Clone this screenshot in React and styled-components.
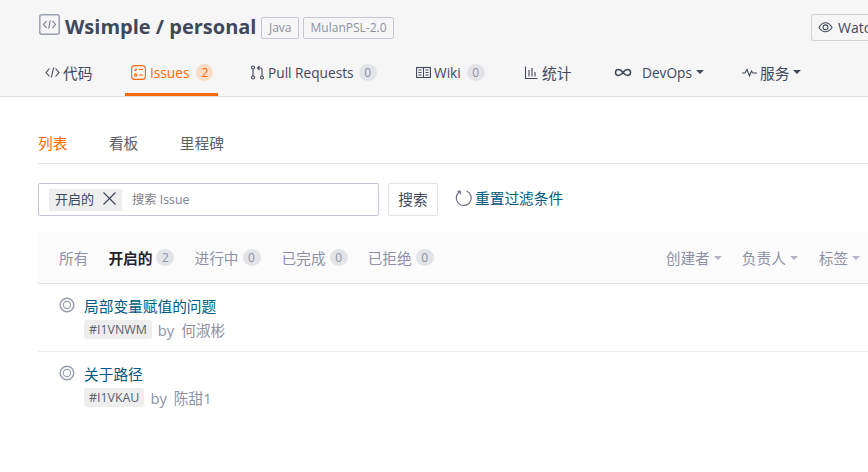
import React from 'react'
import styled, { createGlobalStyle } from 'styled-components'

const GlobalStyle = createGlobalStyle`
  html, body { margin: 0; padding: 0; background: #fff; overflow: hidden; }
  body { font-family: "Open Sans", "Noto Sans CJK SC", sans-serif; font-size: 14.7px; color: #40485b; }
`
const Page = styled.div`
  width: 868px;
  height: 472px;
  overflow: hidden;
`
const Header = styled.div`
  height: 96px;
  background: #f6f6f6;
  border-bottom: 1px solid #e0e0e0;
`
const TitleRow = styled.div`
  display: flex;
  align-items: flex-start;
  height: 54px;
  padding-left: 39px;
  white-space: nowrap;
`
const RepoIcon = styled.svg`
  width: 21px;
  height: 21px;
  margin-top: 14px;
  flex: none;
`
const RepoName = styled.div`
  margin: 13px 0 0 5px;
  font-size: 20px;
  line-height: 28px;
  font-weight: 700;
  color: #40485b;
`
const Label = styled.span`
  margin: 17px 0 0 ${p => p.$gap}px;
  height: 20px;
  padding: 0 6.5px;
  border: 1px solid #c4c8d2;
  border-radius: 2px;
  font-size: 12px;
  line-height: 20px;
  color: #8c92a4;
`
const Watch = styled.div`
  display: flex;
  align-items: center;
  gap: 5px;
  margin: 14px 0 0 auto;
  width: 57px;
  height: 27px;
  padding-left: 6px;
  box-sizing: border-box;
  border: 1px solid #d0d3da;
  border-right: none;
  border-radius: 3px 0 0 3px;
  overflow: hidden;
  font-size: 14px;
  color: #40485b;
`
const WatchIcon = styled.svg`
  width: 15px;
  height: 15px;
  flex: none;
`
const Tabs = styled.div`
  display: flex;
  height: 42px;
  padding-left: 39px;
`
const Tab = styled.div`
  display: flex;
  align-items: center;
  box-sizing: border-box;
  height: 42px;
  width: ${p => p.$w}px;
  margin-right: ${p => p.$mr ?? 0}px;
  padding-left: 6px;
  padding-bottom: 3px;
  gap: ${p => p.$gap ?? 4}px;
  white-space: nowrap;
  font-size: ${p => (p.$latin ? '13.7px' : '14.7px')};
  color: ${p => (p.$active ? '#ff6a00' : '#40485b')};
  border-bottom: 3px solid ${p => (p.$active ? '#ff6a00' : 'transparent')};
`
const TabIcon = styled.svg`
  width: 15px;
  height: 15px;
  flex: none;
`
const DevOpsIcon = styled.svg`
  width: 18px;
  height: 15px;
  flex: none;
`
const CaretText = styled.span`
  display: flex;
  align-items: center;
`
const Count = styled.span`
  display: inline-flex;
  align-items: center;
  justify-content: center;
  width: ${p => (p.$active ? 17 : 18)}px;
  height: 17px;
  margin-left: ${p => p.$ml ?? 3}px;
  border-radius: 50%;
  font-size: 12px;
  font-weight: 400;
  background: ${p => (p.$active ? '#fbdcc6' : '#e3e4e8')};
  color: ${p => (p.$active ? '#ff6a00' : '#8c92a4')};
`
const Caret = styled.span`
  display: inline-block;
  width: 0;
  height: 0;
  margin-left: 4px;
  border-left: 4px solid transparent;
  border-right: 4px solid transparent;
  border-top: 4px solid ${p => p.$color || '#40485b'};
`
const Content = styled.div`
  padding-left: 38px;
  width: 880px;
`
const SubTabs = styled.div`
  display: flex;
  align-items: center;
  height: 67px;
  padding-top: 24px;
  box-sizing: border-box;
  border-bottom: 1px solid #e3e4e8;
`
const SubTab = styled.span`
  margin-right: ${p => p.$mr ?? 0}px;
  color: ${p => (p.$active ? '#ff6a00' : '#5a5f6c')};
`
const SearchRow = styled.div`
  display: flex;
  align-items: center;
  margin-top: 19px;
  height: 33px;
`
const SearchBox = styled.div`
  display: flex;
  align-items: center;
  width: 341px;
  height: 33px;
  box-sizing: border-box;
  padding-left: 10px;
  border: 1px solid #c4c6d4;
  border-radius: 2px;
`
const Chip = styled.div`
  display: flex;
  align-items: center;
  height: 22px;
  width: 73px;
  box-sizing: border-box;
  padding: 0 0 2px 6px;
  gap: 8px;
  background: #eeeeee;
  font-size: 13px;
  color: #40485b;
`
const ChipClose = styled.svg`
  width: 15px;
  height: 15px;
  flex: none;
`
const Placeholder = styled.span`
  margin: 0 0 2px 10px;
  font-size: 12.3px;
  color: #7b7f8a;
`
const SearchButton = styled.div`
  display: flex;
  align-items: center;
  justify-content: center;
  width: 50px;
  height: 33px;
  box-sizing: border-box;
  margin-left: 9px;
  padding-bottom: 2px;
  border: 1px solid #e3e4e8;
  border-radius: 2px;
  color: #40485b;
`
const ResetLink = styled.div`
  display: flex;
  align-items: center;
  gap: 2px;
  margin-left: 16px;
  padding-bottom: 4px;
  color: #005980;
`
const ResetIcon = styled.svg`
  width: 19px;
  height: 19px;
  flex: none;
`
const FilterBar = styled.div`
  display: flex;
  align-items: center;
  height: 51px;
  margin-top: 16px;
  padding-left: 21px;
  background: #fbfbfc;
  border-bottom: 1px solid #e3e4e8;
`
const Filter = styled.span`
  display: flex;
  align-items: center;
  margin-right: ${p => p.$mr ?? 0}px;
  font-weight: ${p => (p.$active ? 700 : 400)};
  color: ${p => (p.$active ? '#1f2330' : '#8c92a4')};
  white-space: nowrap;
`
const Sorters = styled.div`
  display: flex;
  margin-left: 232px;
`
const Issue = styled.div`
  display: flex;
  height: 68px;
  box-sizing: border-box;
  padding: 11px 0 0 21px;
  border-bottom: ${p => (p.$last ? 'none' : '1px solid #eeeff2')};
`
const IssueIcon = styled.svg`
  width: 16px;
  height: 16px;
  margin: 2px 9px 0 0;
  flex: none;
`
const IssueTitle = styled.div`
  line-height: 22px;
  color: #005980;
`
const IssueMeta = styled.div`
  display: flex;
  align-items: center;
  margin-top: 2px;
  color: #8c92a4;
`
const Ident = styled.span`
  height: 19px;
  padding: 0 5px;
  border-radius: 3px;
  background: #eeeeee;
  font-size: 12.4px;
  line-height: 19px;
  color: #5a5f6c;
  margin-right: 6px;
`
const Author = styled.span`
  margin-left: 7px;
`

function StatusIcon() {
  return (
    <IssueIcon viewBox="0 0 16 16" fill="none" stroke="#9a9fb0">
      <circle cx="8" cy="8" r="6.8" strokeWidth="1.5" />
      <circle cx="8" cy="8" r="3.6" strokeWidth="1.2" />
    </IssueIcon>
  )
}

const Stroke = { fill: 'none', stroke: 'currentColor', strokeWidth: 1.1 }

export default function App() {
  return (
    <Page>
      <GlobalStyle />
      <Header>
        <TitleRow>
          <RepoIcon viewBox="0 0 21 21" fill="none" stroke="#9a9fb0" strokeWidth="1.5">
            <rect x="0.8" y="0.8" width="19.4" height="19.4" rx="2" />
            <path d="M7.5 7 4.5 10.5 7.5 14M13.5 7l3 3.5-3 3.5M11.3 6.5l-1.6 8" stroke="#6c7284" strokeWidth="1.1" />
          </RepoIcon>
          <RepoName>Wsimple / personal</RepoName>
          <Label $gap={5}>Java</Label>
          <Label $gap={4}>MulanPSL-2.0</Label>
          <Watch>
            <WatchIcon viewBox="0 0 16 16" fill="none" stroke="currentColor" strokeWidth="1.1">
              <path d="M1 8c2-3.4 4.4-5 7-5s5 1.6 7 5c-2 3-4.4 4.5-7 4.5S3 11 1 8z" />
              <circle cx="8" cy="7.8" r="2.6" />
            </WatchIcon>
            Watch
          </Watch>
        </TitleRow>
        <Tabs>
          <Tab $w={86} $gap={3}>
            <TabIcon viewBox="0 0 15 15" {...Stroke}>
              <path d="M4.5 3.5 1 7.5l3.5 4M10.5 3.5l3.5 4-3.5 4M8.6 2.5l-2.2 10" />
            </TabIcon>
            代码
          </Tab>
          <Tab $w={93} $mr={27} $active $latin>
            <TabIcon viewBox="0 0 15 15" {...Stroke}>
              <rect x="0.6" y="0.6" width="13.8" height="13.8" rx="3" />
              <path d="M3.5 4.5l1 1 1.5-1.8M8 4.5h4M8 10h4" />
              <circle cx="4.7" cy="10" r="1.1" />
            </TabIcon>
            Issues
            <Count $active>2</Count>
          </Tab>
          <Tab $w={165} $gap={2} $latin>
            <TabIcon viewBox="0 0 15 15" {...Stroke}>
              <circle cx="2" cy="2.5" r="1.5" />
              <circle cx="2" cy="12.5" r="1.5" />
              <circle cx="11" cy="12.5" r="1.5" />
              <path d="M2 4v7M11 11V5c0-1.5-.8-2-2-2H7M8.5 1 6.5 3l2 2" />
            </TabIcon>
            Pull Requests
            <Count>0</Count>
          </Tab>
          <Tab $w={108} $gap={3} $latin>
            <TabIcon viewBox="0 0 15 15" {...Stroke}>
              <rect x="0.6" y="2.5" width="13.8" height="10" />
              <path d="M7.5 2.5v10M2.5 5h3M2.5 7.5h3M2.500 10h3M9.5 5h3M9.5 7.5h3M9.5 10h3" />
            </TabIcon>
            Wiki
            <Count>0</Count>
          </Tab>
          <Tab $w={90} $gap={3}>
            <TabIcon viewBox="0 0 15 15" {...Stroke}>
              <path d="M1.5 1.5v12h12M5 5v6.5M8 3v8.5M11 7v4.5" />
            </TabIcon>
            统计
          </Tab>
          <Tab $w={128} $gap={10} $latin>
            <DevOpsIcon viewBox="0 0 18 15" fill="none" stroke="currentColor" strokeWidth="1.5">
              <path d="M9 7.5C7.5 5.5 6.3 4.500 4.500 4.500a3 3 0 0 0 0 6c1.800 0 3-1 4.500-3s2.700-3 4.500-3a3 3 0 0 1 0 6c-1.800 0-3-1-4.500-3z" />
            </DevOpsIcon>
            <CaretText>
              DevOps<Caret />
            </CaretText>
          </Tab>
          <Tab $w={80} $gap={3}>
            <TabIcon viewBox="0 0 15 15" {...Stroke}>
              <path d="M0 8h3l2-3.5 2.5 6.5 2-5 1.5 2h4" />
            </TabIcon>
            <CaretText>
              服务<Caret />
            </CaretText>
          </Tab>
        </Tabs>
      </Header>
      <Content>
        <SubTabs>
          <SubTab $active $mr={41.5}>列表</SubTab>
          <SubTab $mr={41.5}>看板</SubTab>
          <SubTab>里程碑</SubTab>
        </SubTabs>
        <SearchRow>
          <SearchBox>
            <Chip>
              开启的
              <ChipClose viewBox="0 0 15 15" fill="none" stroke="#40485b" strokeWidth="1.2">
                <path d="M1.5 1.5l12 12M13.5 1.5l-12 12" />
              </ChipClose>
            </Chip>
            <Placeholder>搜索 Issue</Placeholder>
          </SearchBox>
          <SearchButton>搜索</SearchButton>
          <ResetLink>
            <ResetIcon viewBox="0 0 19 19" fill="none" stroke="#6c7284" strokeWidth="1.2">
              <path d="M6 3.5a7.5 7.5 0 1 0 6.5-.5" />
              <path d="M3.5 3.2 6.3 3.4 6.5 6.2" />
            </ResetIcon>
            重置过滤条件
          </ResetLink>
        </SearchRow>
        <FilterBar>
          <Filter $mr={20}>所有</Filter>
          <Filter $mr={20} $active>开启的<Count $ml={4}>2</Count></Filter>
          <Filter $mr={21}>进行中<Count $ml={4}>0</Count></Filter>
          <Filter $mr={20}>已完成<Count $ml={4}>0</Count></Filter>
          <Filter>已拒绝<Count $ml={4}>0</Count></Filter>
          <Sorters>
            <Filter $mr={20}>创建者<Caret $color="#b4b8c4" /></Filter>
            <Filter $mr={21}>负责人<Caret $color="#b4b8c4" /></Filter>
            <Filter>标签<Caret $color="#b4b8c4" /></Filter>
          </Sorters>
        </FilterBar>
        <Issue>
          <StatusIcon />
          <div>
            <IssueTitle>局部变量赋值的问题</IssueTitle>
            <IssueMeta>
              <Ident>#I1VNWM</Ident>by<Author>何淑彬</Author>
            </IssueMeta>
          </div>
        </Issue>
        <Issue $last>
          <StatusIcon />
          <div>
            <IssueTitle>关于路径</IssueTitle>
            <IssueMeta>
              <Ident>#I1VKAU</Ident>by<Author>陈甜1</Author>
            </IssueMeta>
          </div>
        </Issue>
      </Content>
    </Page>
  )
}
